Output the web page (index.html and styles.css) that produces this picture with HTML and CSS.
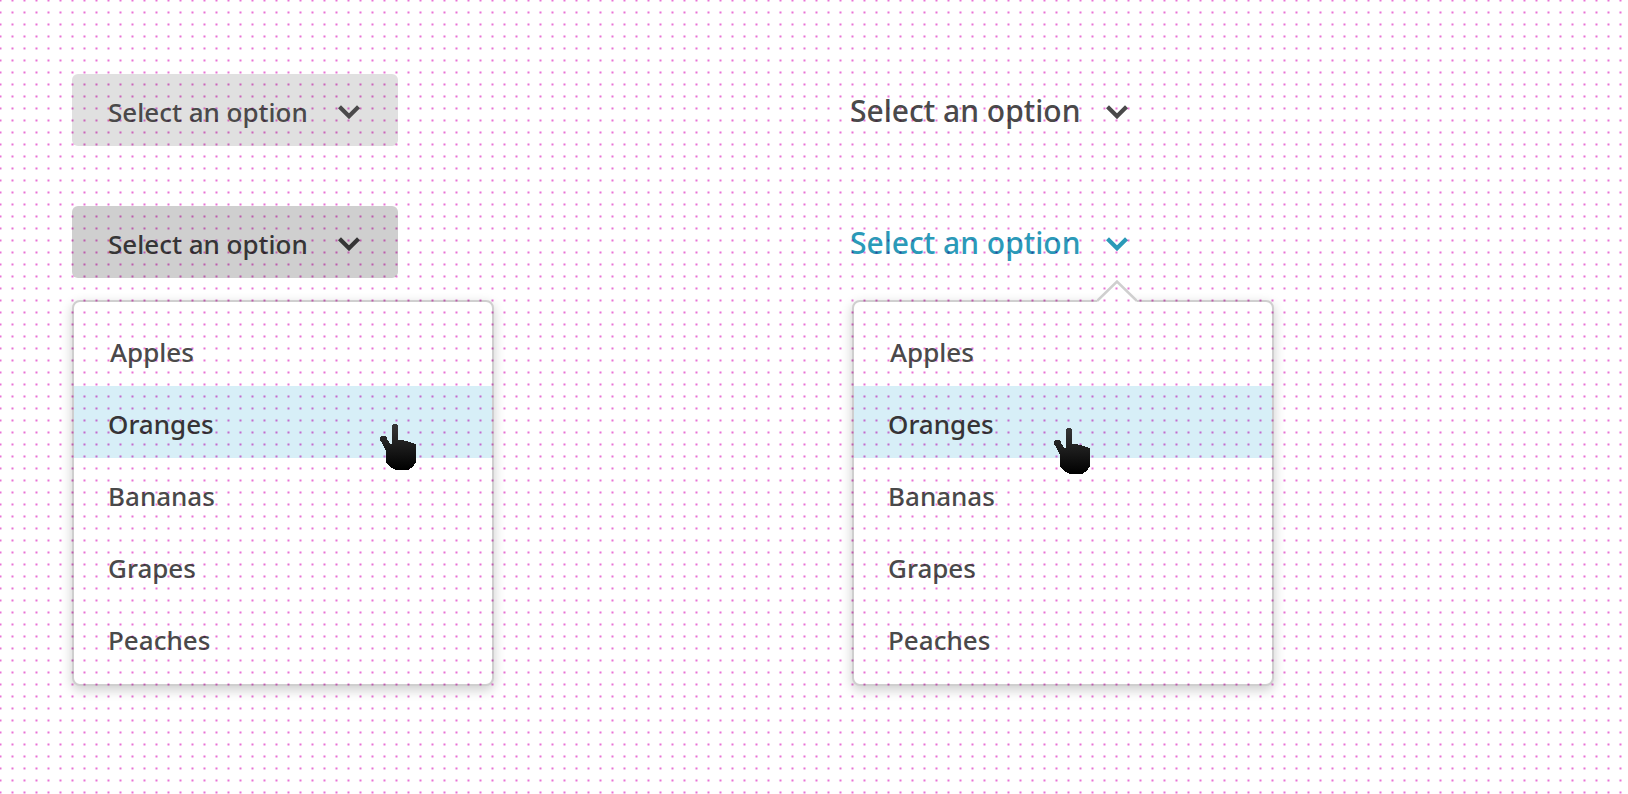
FILE: index.html
```html
<!DOCTYPE html>
<html lang="en">
<head>
<meta charset="utf-8">
<title>Dropdowns</title>
<link rel="stylesheet" href="styles.css">
</head>
<body>
<svg class="defs" width="0" height="0" aria-hidden="true">
  <defs>
    <linearGradient id="ink" x1="0" y1="0" x2="0" y2="1">
      <stop offset="0" stop-color="#363636"/>
      <stop offset="1" stop-color="#000"/>
    </linearGradient>
    <symbol id="chevron" viewBox="0 0 22 14">
      <path d="M1.500 1.700 11 11.200 20.500 1.700" fill="none" stroke="currentColor" stroke-width="4.200"/>
    </symbol>
    <symbol id="hand" viewBox="0 0 36 46">
      <path fill="url(#ink)" shape-rendering="crispEdges" d="M12 2 13 0H17L18 2V16H24V17H28V18H31V19H34V20H36V38L34 41 31 44 28 46H16L12 44 8 41 6 38V27L4 23 2 19 0 17V13L2 12H5L7 14V16L9 18 10 20H12Z"/>
    </symbol>
  </defs>
</svg>
<main class="board">
  <section class="column">
    <button class="trigger filled" type="button"><span class="label">Select an option</span><svg class="chevron"><use href="#chevron"/></svg></button>
    <button class="trigger filled active" type="button" aria-expanded="true"><span class="label">Select an option</span><svg class="chevron"><use href="#chevron"/></svg></button>
    <ul class="menu">
      <li><button class="item first" type="button">Apples</button></li>
      <li><button class="item hovered" type="button">Oranges</button></li>
      <li><button class="item" type="button">Bananas</button></li>
      <li><button class="item" type="button">Grapes</button></li>
      <li><button class="item" type="button">Peaches</button></li>
    </ul>
    <svg class="hand hand-filled" aria-hidden="true"><use href="#hand"/></svg>
  </section>
  <section class="column">
    <button class="trigger plain" type="button"><span class="label">Select an option</span><svg class="chevron"><use href="#chevron"/></svg></button>
    <button class="trigger plain active" type="button" aria-expanded="true"><span class="label">Select an option</span><svg class="chevron"><use href="#chevron"/></svg></button>
    <ul class="menu pointed">
      <li><button class="item first" type="button">Apples</button></li>
      <li><button class="item hovered" type="button">Oranges</button></li>
      <li><button class="item" type="button">Bananas</button></li>
      <li><button class="item" type="button">Grapes</button></li>
      <li><button class="item" type="button">Peaches</button></li>
    </ul>
    <svg class="pointer" viewBox="0 0 40 22" aria-hidden="true"><path d="M0 21 20 1 40 21V22H0Z" fill="#fff"/><path d="M0 21 20 1.500 40 21" fill="none" stroke="#cfcfcf" stroke-width="2.500"/></svg>
    <svg class="hand hand-plain" aria-hidden="true"><use href="#hand"/></svg>
  </section>
</main>
</body>
</html>
```
FILE: styles.css
```css
* {
  box-sizing: border-box;
}

body {
  margin: 0;
  min-height: 100vh;
  background: #fff;
  color: #4a4a4a;
  font-family: "Noto Sans", "Open Sans", sans-serif;
  font-size: 26px;
  font-weight: 500;
}

/* Dotted 12px grid printed over the page */
body::after {
  content: "";
  position: fixed;
  inset: 0;
  pointer-events: none;
  mix-blend-mode: multiply;
  background-image: radial-gradient(circle 2px at 54% 54%, #e974d2 0, #e974d2 15%, #f3b6ea 50%, #fbe2f7 75%, #fff 100%);
  background-size: 12px 12px;
  background-position: 6px 6px;
}

.defs {
  position: absolute;
}

.board {
  display: grid;
  grid-template-columns: 1fr 1fr;
  padding: 74px 0 0 72px;
}

.column {
  position: relative;
  display: flex;
  flex-direction: column;
  align-items: flex-start;
}

.trigger {
  display: flex;
  align-items: center;
  height: 72px;
  margin: 0 0 60px;
  padding: 4px 38px 0 36px;
  border: 0;
  border-radius: 6px;
  background: none;
  color: inherit;
  font: inherit;
  cursor: pointer;
}

.trigger.active {
  margin-bottom: 22px;
}

.filled {
  gap: 30px;
  background: #e0e0e0;
}

.filled.active {
  background: #cfcfcf;
  color: #363636;
}

.plain {
  gap: 25px;
  padding: 4px 0 0;
  font-size: 30px;
}

.plain .label {
  padding-bottom: 4px;
}

.plain.active {
  color: #2b9ab8;
}

.chevron {
  width: 22px;
  height: 14px;
}

.menu {
  width: 422px;
  max-width: 100%;
  margin: 0;
  padding: 12px 0 10px;
  border: 2px solid #cfcfcf;
  border-radius: 8px;
  background: #fff;
  list-style: none;
  box-shadow: 0 4px 12px rgba(0, 0, 0, 0.2);
}

.menu.pointed {
  margin-left: 2px;
}

.item {
  display: block;
  width: 100%;
  height: 72px;
  padding: 4px 34px 0;
  border: 0;
  background: none;
  color: inherit;
  font: inherit;
  text-align: left;
  cursor: pointer;
}

.item.first {
  padding-left: 36px;
}

.item.hovered {
  background: #d7eff7;
  color: #363636;
}

.pointer {
  position: absolute;
  top: 206px;
  left: 247px;
  width: 40px;
  height: 22px;
}

.hand {
  position: absolute;
  z-index: 1;
  width: 36px;
  height: 46px;
}

.hand-filled {
  top: 350px;
  left: 308px;
}

.hand-plain {
  top: 354px;
  left: 204px;
}
```
